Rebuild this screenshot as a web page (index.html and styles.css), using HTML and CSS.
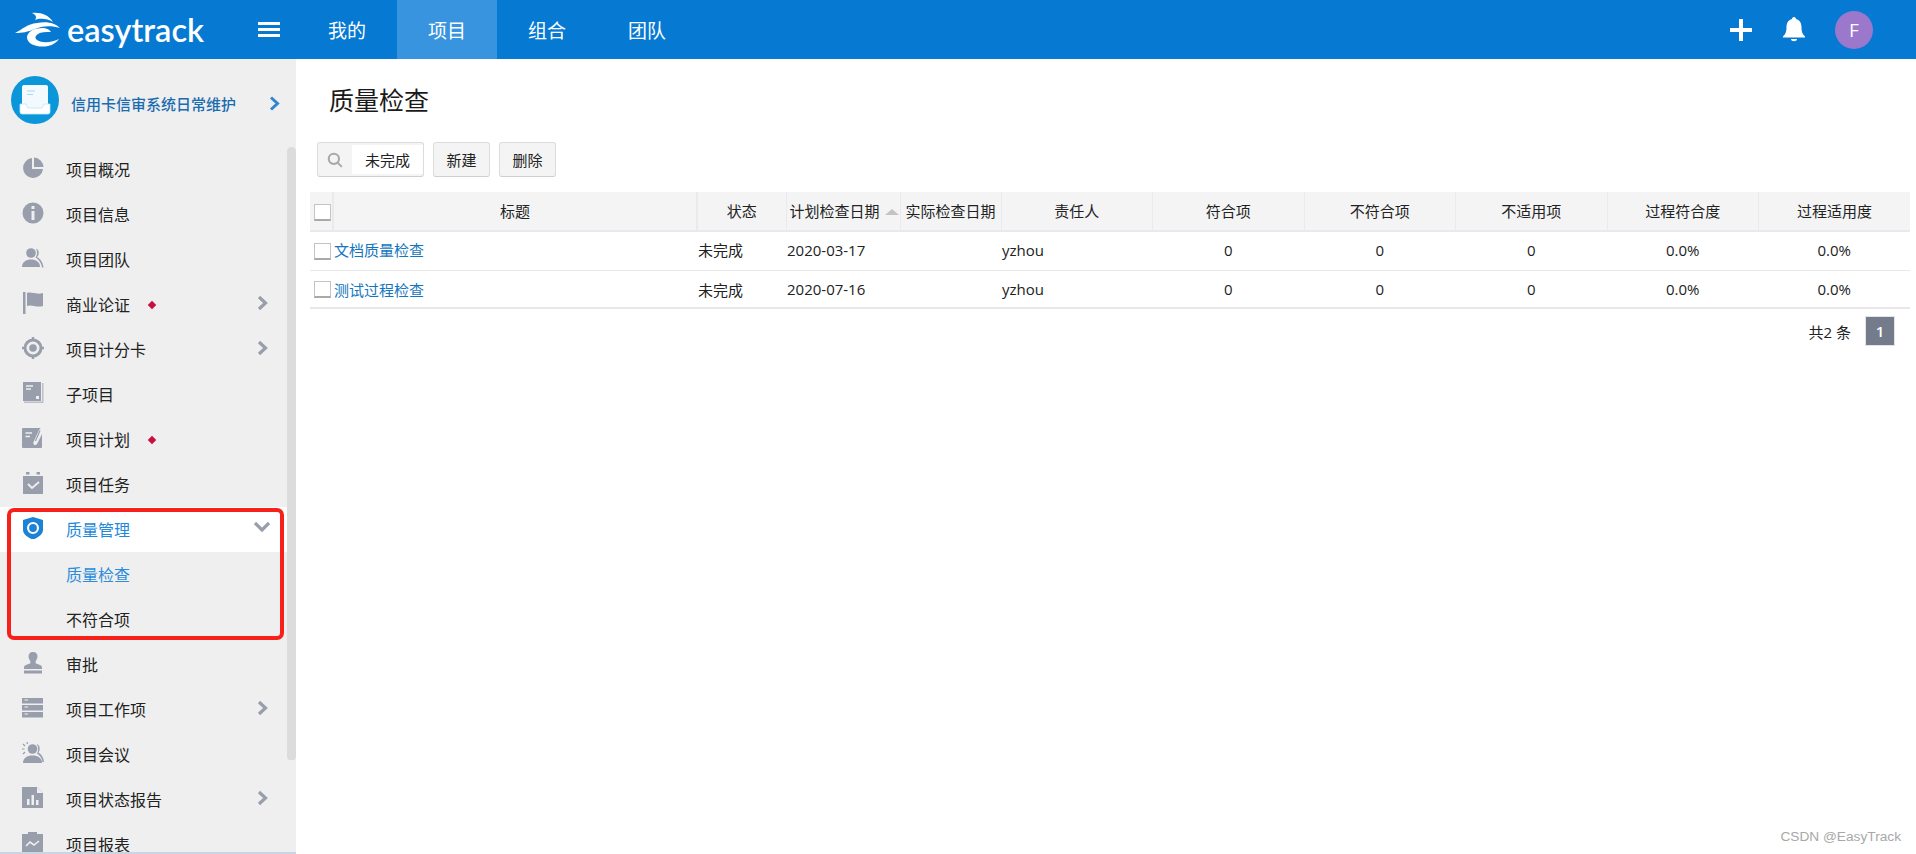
FILE: index.html
```html
<!DOCTYPE html>
<html lang="zh-CN">
<head>
<meta charset="utf-8">
<title>质量检查</title>
<link rel="stylesheet" href="styles.css">
</head>
<body>
<header class="topbar">
  <div class="logo">
    <svg class="logo-mark" viewBox="0 0 46 36"><path d="M17 1C25 0 34 3 38 10C32 6 24 6 20 8C22 5 21 3 17 1Z"/><path d="M0 21C8 17 12 12 22 11C32 9 40 11 45 16C36 13 26 14 20 17C12 20 8 21 0 21Z"/><path d="M28 16C18 16 12 20 12 26C13 33 24 36 33 34C38 33 42 30 44 27C38 30 28 32 22 28C18 25 22 20 32 20L36 20C34 17 31 16 28 16Z"/></svg>
    <span class="logo-text">easytrack</span>
  </div>
  <div class="burger"><i></i><i></i><i></i></div>
  <nav class="tabs">
    <a class="tab">我的</a>
    <a class="tab tab-on">项目</a>
    <a class="tab">组合</a>
    <a class="tab">团队</a>
  </nav>
  <div class="top-right">
    <svg class="plus" viewBox="0 0 24 24"><path d="M12 1V23M1 12H23"/></svg>
    <svg class="bell" viewBox="0 0 22 25"><path d="M11 0C12.400 0 13 1 13 2C17 3 18.500 6.500 18.500 10C18.500 15 19.500 17 22 19.500V20.500H0V19.500C2.500 17 3.500 15 3.500 10C3.500 6.500 5 3 9 2C9 1 9.600 0 11 0Z"/><path d="M8 22H14C14 25 8 25 8 22Z"/></svg>
    <div class="avatar">F</div>
  </div>
</header>
<div class="body">
  <aside class="side">
    <div class="proj">
      <svg class="proj-ico" viewBox="0 0 48 48"><circle cx="24" cy="24" r="24" fill="#0a96d9"/><rect x="11" y="9" width="26" height="23" rx="2" fill="#f3fafe"/><path d="M16 15H24M16 18.500H22" stroke="#a5d8f2" stroke-width="1.200"/><path d="M9 28H15L17 32H31L33 28H39V36Q39 38 37 38H11Q9 38 9 36Z" fill="#fff" stroke="#bfe4f7" stroke-width=".8"/></svg>
      <span class="proj-name">信用卡信审系统日常维护</span>
      <svg class="proj-arrow" viewBox="0 0 11 15"><path d="M2 1.500L8.500 7.500L2 13.500"/></svg>
    </div>
    <div class="nav">
      <a class="row"><svg class="ico" viewBox="0 0 22 22"><path d="M10 1A10 10 0 1 0 21 12H10Z"/><path d="M12 .5A10 10 0 0 1 21.500 10H12Z"/></svg><span>项目概况</span></a>
      <a class="row"><svg class="ico" viewBox="0 0 22 22"><path fill-rule="evenodd" d="M11 .5A10.500 10.500 0 1 1 11 21.500A10.500 10.500 0 1 1 11 .5ZM9.500 4V7H12.500V4ZM9.500 9V18H12.500V9Z"/></svg><span>项目信息</span></a>
      <a class="row"><svg class="ico" viewBox="0 0 22 22"><circle cx="9" cy="6" r="4.800"/><path d="M0 20C0 15 4 12.500 9 12.500S18 15 18 20Z"/><path d="M14 1.500C17.500 2.500 17.500 8 15 10C18 11.500 21 15 21.500 20.500H20C19.500 16 16.500 12 13.500 10.500C15.500 8 15.500 4 14 1.500Z"/></svg><span>项目团队</span></a>
      <a class="row"><svg class="ico" viewBox="0 0 22 22"><rect x="1" y="0" width="2.500" height="22"/><path d="M5 1C10 -.5 14 3 21 1V14C14 16 10 12 5 14Z"/></svg><span>商业论证</span><i class="dot"></i><svg class="chev" viewBox="0 0 11 16"><path d="M2 2L8.500 8L2 14"/></svg></a>
      <a class="row"><svg class="ico" viewBox="0 0 22 22"><path fill-rule="evenodd" d="M11 1.500A9.500 9.500 0 1 1 11 20.500A9.500 9.500 0 1 1 11 1.500ZM11 4.500A6.500 6.500 0 1 0 11 17.500A6.500 6.500 0 1 0 11 4.500Z"/><circle cx="11" cy="11" r="3.800"/><path d="M9.800 0H12.200V3H9.800ZM9.800 19H12.200V22H9.800ZM0 9.800H3V12.200H0ZM19 9.800H22V12.200H19Z"/></svg><span>项目计分卡</span><svg class="chev" viewBox="0 0 11 16"><path d="M2 2L8.500 8L2 14"/></svg></a>
      <a class="row"><svg class="ico" viewBox="0 0 22 22"><path d="M20 1H21.500V21H2V19.500H20Z" opacity=".6"/><rect x="1" y="0" width="18" height="19"/><path d="M4 4H11M4 7H9" stroke="#efefef" stroke-width="1.300"/><path d="M14 14H17V17H14Z" fill="#efefef"/></svg><span>子项目</span></a>
      <a class="row"><svg class="ico" viewBox="0 0 22 22"><rect x="0" y="1" width="20" height="20" rx="1"/><path d="M3.500 6H10M3.500 9.500H8" stroke="#efefef" stroke-width="1.400"/><path d="M19 .5C21 1 22 3 21 5L15 17C14 18.500 12 18.500 11.500 17C11 16 11.500 15 12 14L17 3" fill="#efefef"/><path d="M18 3.500L13.500 14" stroke="#989eab" stroke-width="1.200"/></svg><span>项目计划</span><i class="dot"></i></a>
      <a class="row"><svg class="ico" viewBox="0 0 22 22"><path d="M1 4H21V22H1Z"/><path d="M4 0H7.500V2.500H4ZM14.500 0H18V2.500H14.500Z"/><path d="M6 12L10 16L17 10" fill="none" stroke="#efefef" stroke-width="1.800"/></svg><span>项目任务</span></a>
      <a class="row row-on"><svg class="ico ico-on" viewBox="0 0 22 22"><path fill-rule="evenodd" d="M11 0L21 3V13C21 17 16 21 11 22.500C6 21 1 17 1 13V3ZM11 5A6 6 0 1 0 11 17A6 6 0 1 0 11 5Z"/><circle cx="11" cy="11" r="3.900"/></svg><span>质量管理</span><svg class="chev chev-down" viewBox="0 0 18 11"><path d="M2 2L9 9L16 2"/></svg></a>
      <a class="row row-sub row-cur"><span>质量检查</span></a>
      <a class="row row-sub"><span>不符合项</span></a>
      <a class="row"><svg class="ico" viewBox="0 0 22 22"><path d="M11 0C14 0 15.500 2 15.500 4.500C15.500 7 13.500 8.500 13.500 10.500C13.500 12.500 20 12 20 15.500V17H2V15.500C2 12 8.500 12.500 8.500 10.500C8.500 8.500 6.500 7 6.500 4.500C6.500 2 8 0 11 0Z"/><rect x="2" y="18.500" width="18" height="3"/></svg><span>审批</span></a>
      <a class="row"><svg class="ico" viewBox="0 0 22 22"><rect x="0" y="1" width="21" height="5.500"/><rect x="0" y="8" width="21" height="5.500"/><rect x="0" y="15" width="21" height="5.500" /><path d="M2.500 3H6M2.500 10H6M2.500 17H6" stroke="#efefef" stroke-width="1.200"/></svg><span>项目工作项</span><svg class="chev" viewBox="0 0 11 16"><path d="M2 2L8.500 8L2 14"/></svg></a>
      <a class="row"><svg class="ico" viewBox="0 0 22 22"><circle cx="10.500" cy="7" r="4.800"/><path d="M1 21C1 16 5 13.500 10.500 13.500S20 16 20 21Z"/><path d="M15 2C18 3 18.500 8 16.500 10.500C19 12 21.500 15 22 20H20.500C20 16 17.500 13 15 11.500C16.500 9 16.500 5 15 2Z"/><path d="M1 2L3 4M0 7H2.500M1 12L3 10M5 0L5.500 2" stroke="#989eab" stroke-width="1.200"/></svg><span>项目会议</span></a>
      <a class="row"><svg class="ico" viewBox="0 0 22 22"><path d="M0 0H15L21 6V21H0Z"/><path d="M15 0V6H21Z" fill="#efefef"/><path d="M5 12H7.500V18H5ZM9.500 8H12V18H9.500ZM14 13H16.500V18H14Z" fill="#efefef"/></svg><span>项目状态报告</span><svg class="chev" viewBox="0 0 11 16"><path d="M2 2L8.500 8L2 14"/></svg></a>
      <a class="row"><svg class="ico" viewBox="0 0 22 22"><path d="M0 2H6V0H15V2H21V22H0Z"/><path d="M4 14L8 10L12 13L17 9" fill="none" stroke="#efefef" stroke-width="1.600"/></svg><span>项目报表</span></a>
      <div class="thumb"></div>
      <div class="mark"></div>
    </div>
  </aside>
  <main class="main">
    <h1 class="title">质量检查</h1>
    <div class="tools">
      <div class="search">
        <span class="search-ico"><svg viewBox="0 0 14 14"><circle cx="6" cy="6" r="4.500"/><path d="M9.500 9.500L13 13"/></svg></span>
        <span class="search-val">未完成</span>
      </div>
      <button class="btn">新建</button>
      <button class="btn">删除</button>
    </div>
    <table class="grid">
      <colgroup>
        <col class="c-chk"><col class="c-title"><col class="c-state"><col class="c-plan"><col class="c-act"><col class="c-num"><col class="c-num"><col class="c-num"><col class="c-num"><col class="c-num"><col class="c-num">
      </colgroup>
      <thead>
        <tr>
          <th class="th-chk"><i class="chk"></i></th>
          <th>标题</th>
          <th>状态</th>
          <th class="th-tight">计划检查日期<i class="sort"></i></th>
          <th class="th-tight th-act">实际检查日期</th>
          <th>责任人</th>
          <th>符合项</th>
          <th>不符合项</th>
          <th>不适用项</th>
          <th>过程符合度</th>
          <th>过程适用度</th>
        </tr>
      </thead>
      <tbody>
        <tr>
          <td class="td-chk"><i class="chk"></i></td>
          <td class="td-l"><a class="link">文档质量检查</a></td>
          <td class="td-l">未完成</td>
          <td class="td-l">2020-03-17</td>
          <td></td>
          <td class="td-l">yzhou</td>
          <td>0</td><td>0</td><td>0</td><td>0.0%</td><td>0.0%</td>
        </tr>
        <tr>
          <td class="td-chk"><i class="chk"></i></td>
          <td class="td-l"><a class="link">测试过程检查</a></td>
          <td class="td-l">未完成</td>
          <td class="td-l">2020-07-16</td>
          <td></td>
          <td class="td-l">yzhou</td>
          <td>0</td><td>0</td><td>0</td><td>0.0%</td><td>0.0%</td>
        </tr>
      </tbody>
    </table>
    <div class="pager"><span class="total">共2 条</span><span class="page">1</span></div>
  </main>
</div>
<div class="wm">CSDN @EasyTrack</div>
</body>
</html>
```
FILE: styles.css
```css
* { box-sizing: border-box; }
html, body { margin: 0; height: 854px; overflow: hidden; }
body { font-family: "Open Sans", "Noto Sans CJK SC", sans-serif; color: #222; background: #fff; font-size: 15px; position: relative; }
a { text-decoration: none; }

.topbar { height: 59px; background: #0679d3; display: flex; align-items: center; color: #fff; }
.logo { width: 258px; display: flex; align-items: center; padding-left: 15px; gap: 6px; }
.logo-mark { width: 46px; height: 36px; fill: #fff; flex: none; }
.logo-text { font-family: Lato, sans-serif; font-weight: 600; font-size: 32.5px; line-height: 36px; letter-spacing: 0; }
.burger { width: 39px; display: flex; flex-direction: column; gap: 3px; }
.burger i { display: block; width: 22px; height: 3px; background: #fff; }
.tabs { display: flex; height: 59px; }
.tab { width: 100px; display: flex; align-items: center; justify-content: center; color: #fff; font-size: 19px; }
.tab-on { background: #3994e0; }
.top-right { margin-left: auto; display: flex; align-items: center; gap: 30px; padding-right: 43px; }
.plus { width: 24px; height: 24px; fill: none; stroke: #fff; stroke-width: 4; }
.bell { width: 22px; height: 25px; fill: #fff; }
.avatar { width: 38px; height: 38px; border-radius: 50%; background: #9b78cc; display: flex; align-items: center; justify-content: center; font-size: 19px; color: #fff; }

.body { display: flex; height: 795px; }
.side { width: 296px; flex: none; background: #efefef; display: flex; flex-direction: column; border-bottom: 2px solid #c8d5e2; }
.proj { height: 88px; display: flex; align-items: center; padding-left: 11px; }
.proj-ico { width: 48px; height: 48px; flex: none; margin-top: -6px; }
.proj-name { margin-left: 12px; font-size: 15px; font-weight: 500; color: #1a6cb0; }
.proj-arrow { width: 11px; height: 15px; margin-left: 33px; fill: none; stroke: #2f86d2; stroke-width: 3; }
.nav { flex: 1; overflow: hidden; position: relative; }
.row { height: 45px; display: flex; align-items: center; padding-left: 22px; padding-bottom: 1px; font-size: 16px; color: #222; }
.row span { margin-left: 22px; }
.ico { width: 22px; height: 22px; flex: none; fill: #989eab; margin-top: -2px; }
.ico-on { fill: #1b82d6; }
.row-on { background: #fff; }
.row-on span { color: #1e8ad9; }
.row-sub span { margin-left: 44px; }
.row-cur span { color: #2a8cdb; }
.dot { width: 6px; height: 6px; background: #c8103f; transform: rotate(45deg); margin-left: 19px; margin-top: 2px; }
.chev { width: 11px; height: 16px; fill: none; stroke: #989eab; stroke-width: 3.200; margin-left: auto; margin-right: 28px; margin-top: -2px; }
.chev-down { width: 18px; height: 11px; margin-right: 25px; margin-top: -5px; }
.thumb { position: absolute; left: 287px; top: 0; width: 9px; height: 613px; background: #dcdcdc; border-radius: 5px 5px 4px 4px; }
.mark { position: absolute; left: 7px; top: 361px; width: 277px; height: 132px; border: 4px solid #f7201a; border-radius: 7px; }

.main { flex: 1; padding: 0 6px 0 14px; min-width: 0; }
.title { margin: 0; height: 83px; padding-left: 19px; font-size: 25px; font-weight: 400; line-height: 83px; color: #1a1a1a; }
.tools { display: flex; gap: 9px; height: 35px; padding-left: 7px; margin-bottom: 15px; }
.search { width: 107px; display: flex; background: #f4f4f4; border: 1px solid #dcdcdc; border-radius: 3px; border-bottom-color: #cfcfcf; }
.search-ico { width: 34px; display: flex; align-items: center; justify-content: center; }
.search-ico svg { width: 16px; height: 16px; fill: none; stroke: #a8a8a8; stroke-width: 1.800; }
.search-val { flex: 1; background: #fff; display: flex; align-items: center; padding-left: 13px; font-size: 15px; margin: 2px 0; }
.btn { width: 57px; height: 35px; padding: 0; background: #f4f4f4; border: 1px solid #dcdcdc; border-bottom-color: #cfcfcf; border-radius: 3px; font: inherit; color: #222; }

.grid { width: 1600px; table-layout: fixed; border-collapse: collapse; font-size: 15px; }
.c-chk { width: 23px; }
.c-title { width: 364px; }
.c-state { width: 89px; }
.c-plan { width: 114px; }
.c-act { width: 101px; }
.c-num { width: 151.500px; }
.grid th { height: 39px; padding: 0 0 2px; background: #f4f4f5; font-weight: 400; text-align: center; border-right: 1px solid #e9e9ee; border-bottom: 2px solid #e8e8ee; white-space: nowrap; }
.grid th:last-child { border-right: 0; }
.grid th:nth-child(2) { border-right-width: 2px; }
.grid .th-chk { border-right-width: 2px; padding: 2px 0 0; }
.grid .th-tight { text-align: left; padding-left: 3px; }
.grid .th-act { padding-left: 5px; }
.grid td { height: 39px; padding: 0 0 2px; text-align: center; border-bottom: 1px solid #e8e8ec; color: #222; white-space: nowrap; }
.grid tbody tr:last-child td { height: 38px; padding: 1px 0 0; border-bottom-width: 2px; }
.grid tbody tr td.td-l { text-align: left; padding-left: 1px; }
.grid tbody tr td.td-chk { padding: 2px 0 0; text-align: right; }
.chk { display: block; width: 17px; height: 17px; margin-left: 4px; background: #fff; border: 1px solid #c4c4c4; border-bottom: 2px solid #a9a9a9; }
.sort { display: inline-block; width: 0; height: 0; margin-left: 5px; vertical-align: 2px; border: 7px solid transparent; border-top: 0; border-bottom: 6px solid #c3c3c3; }
.link { color: #1476c0; }
.pager { display: flex; justify-content: flex-end; align-items: center; gap: 14px; margin-top: 7px; padding-right: 15px; }
.total { font-size: 15px; }
.page { width: 30px; height: 30px; background: #747b8b; border: 1px solid #e4e4e8; color: #fff; display: flex; align-items: center; justify-content: center; font-size: 15px; font-weight: 600; }

.wm { position: absolute; right: 15px; top: 829px; font-family: "Liberation Sans", sans-serif; font-size: 13.700px; color: #a8a8a8; }
```
